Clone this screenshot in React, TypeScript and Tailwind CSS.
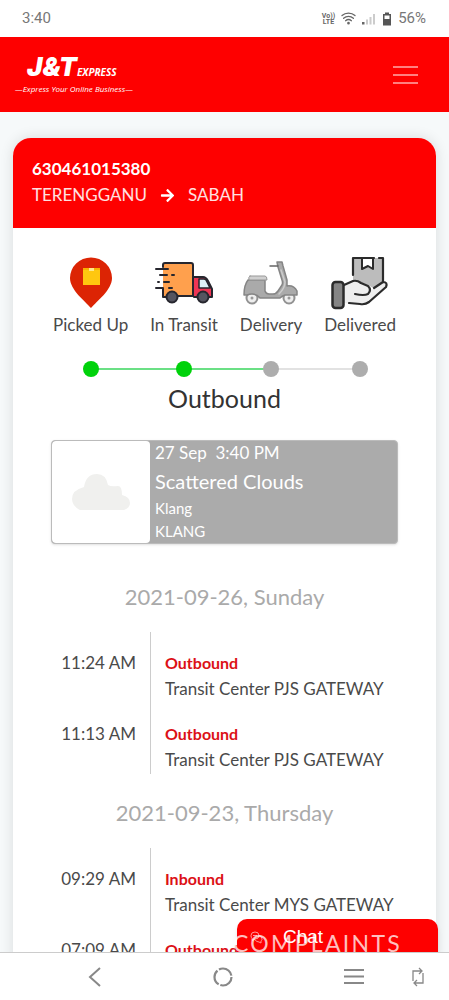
import type { ReactNode } from 'react'
import { FaArrowRight } from 'react-icons/fa'

type Scan = { time: string; status: string; place: string }
type Day = { date: string; scans: Scan[] }

const days: Day[] = [
  {
    date: '2021-09-26, Sunday',
    scans: [
      { time: '11:24 AM', status: 'Outbound', place: 'Transit Center PJS GATEWAY' },
      { time: '11:13 AM', status: 'Outbound', place: 'Transit Center PJS GATEWAY' },
    ],
  },
  {
    date: '2021-09-23, Thursday',
    scans: [
      { time: '09:29 AM', status: 'Inbound', place: 'Transit Center MYS GATEWAY' },
      { time: '07:09 AM', status: 'Outbound', place: 'Transit Center MYS GATEWAY' },
    ],
  },
]

function StatusBar() {
  return (
    <div className="flex h-[37px] shrink-0 items-center justify-between bg-white pr-[23px] pl-[22px] font-['Roboto',sans-serif] text-[15px] text-[#777]">
      <span>3:40</span>
      <div className="flex items-center gap-[6px]">
        <div className="text-center text-[7px] leading-[6px] font-bold text-[#666]">
          <div>Vo))</div>
          <div>LTE</div>
        </div>
        <svg width="15" height="13" viewBox="0 0 15 13" fill="none" stroke="#666" strokeWidth="1.3" strokeLinecap="round">
          <path d="M1 3.6C4.6 0.4 10.4 0.4 14 3.6M2.6 6.3c2.8-2.5 7-2.5 9.8 0M4.6 8.7c1.7-1.4 4.1-1.4 5.8 0" />
          <circle cx="7.5" cy="11.2" r="0.7" fill="#666" />
        </svg>
        <svg width="14" height="12" viewBox="0 0 14 12" fill="#ccc">
          <rect x="0" y="9" width="2.5" height="2.5" fill="#666" />
          <rect x="4" y="6.5" width="2" height="5" />
          <rect x="7.5" y="4" width="2" height="7.5" />
          <rect x="11" y="1" width="2" height="10.5" />
        </svg>
        <svg width="10" height="14" viewBox="0 0 10 14">
          <path d="M3 .5h4v1.5h2v11.5H1V2h2z" fill="#555" />
          <path d="M2.5 3.5h5v3.5h-5z" fill="#fff" />
        </svg>
        <span>56%</span>
      </div>
    </div>
  )
}

function Header() {
  return (
    <header className="flex h-[75px] shrink-0 items-center justify-between bg-[#fe0000] pr-[31px] pl-[15px]">
      <a href="#home" className="block whitespace-nowrap text-white italic">
        <span className="flex items-baseline pl-[12px] leading-6">
          <span className="font-['Inter',sans-serif] text-[26px] font-black">J&amp;T</span>
          <span className="font-['Open_Sans',sans-serif] text-[10px] font-bold">EXPRESS</span>
        </span>
        <span className="block font-['Open_Sans',sans-serif] text-[8px] leading-[10px]">—Express Your Online Business—</span>
      </a>
      <button type="button" aria-label="Menu" className="flex w-[25px] flex-col gap-[6px]">
        <span className="h-[2px] w-full bg-[#ff8080]" />
        <span className="h-[2px] w-full bg-[#ff8080]" />
        <span className="h-[2px] w-full bg-[#ff8080]" />
      </button>
    </header>
  )
}

function PinIcon() {
  return (
    <svg width="44" height="52" viewBox="0 0 44 52">
      <path d="M22 51C16 44 1 33 1 21a21 20.5 0 0 1 42 0c0 12-15 23-21 30z" fill="#dc2404" />
      <path d="M14 11h17v17H14z" fill="#ffc70f" />
      <path d="M14 11h17v2H14z" fill="#f9b000" />
      <path d="M20 11h5v3h-5z" fill="#ffe78a" />
    </svg>
  )
}

function TruckIcon() {
  return (
    <svg width="58" height="42" viewBox="0 0 58 42" strokeLinecap="round" strokeLinejoin="round">
      <path d="M8 3q0-2 2-2h26q2 0 2 2v32H8z" fill="#ffa04d" />
      <path d="M39 15h9q3 0 5 4l4 8v8H39z" fill="#ee3554" />
      <path d="M44 17h5q2 0 3 3l3 6H44z" fill="#dff1f7" stroke="#26262e" strokeWidth="1.5" />
      <g fill="none" stroke="#26262e" strokeWidth="2">
        <path d="M8 5V3q0-2 2-2h26q2 0 2 2v31H23M8 26v9h3M39 15h9q3 0 5 4l4 8v8h-3M39 35h3M1 7h12M5 13h7M17 13h2M3 20h1M9 20h5M1 26h7M14 26h3" />
      </g>
      <circle cx="17" cy="35" r="5.5" fill="#555560" stroke="#26262e" strokeWidth="2" />
      <circle cx="48" cy="35" r="5.5" fill="#555560" stroke="#26262e" strokeWidth="2" />
    </svg>
  )
}

function ScooterIcon() {
  return (
    <svg width="56" height="44" viewBox="0 0 56 44" strokeLinejoin="round" strokeLinecap="round">
      <circle cx="9" cy="37" r="5.5" fill="#eee" stroke="#929292" strokeWidth="2" />
      <circle cx="46" cy="37" r="5.5" fill="#eee" stroke="#929292" strokeWidth="2" />
      <path d="M5 19h17v11q1 3 4 3h4q3 0 5-3l4-6q1-2 0-5L35 6l-1-5h5l1 4 4 14v6q7-1 10 5v4H42q-3 1-5 3H17q-5-6-13-3H1q0-10 4-15z" fill="#aaa" stroke="#858585" strokeWidth="1.5" />
      <path d="M7 15h15q2 0 2 4H6q-1-3 1-4z" fill="#d0d0d0" stroke="#999" />
      <path d="M27 5h8" stroke="#666" strokeWidth="1.5" />
      <path d="M38 9l4 12q0 6-6 12" fill="none" stroke="#ccc" strokeWidth="1.5" />
      <circle cx="9" cy="37" r="1.5" fill="#999" />
      <circle cx="46" cy="37" r="1.5" fill="#999" />
    </svg>
  )
}

function HandIcon() {
  return (
    <svg width="58" height="54" viewBox="0 0 58 54" strokeLinecap="round" strokeLinejoin="round">
      <path d="M22 2h30v28l-8 3-9-5-13-3z" fill="#bcbcbc" />
      <path d="M31 2h11v11l-5-3-6 3z" fill="#fff" stroke="#2b2b2b" strokeWidth="2" />
      <path d="M13 29l9-4q5-1 9 2l6 3q3 2 2 5l13-8q4-1 4 3l-18 17q-4 3-9 2l-16-2z" fill="#eee" />
      <g fill="none" stroke="#2b2b2b" strokeWidth="2.2">
        <path d="M22 19V2h21M48 2h4v24M13 29l9-4q4-1 8 2l7 3q4 4 0 8-4 2-13 0M43 32l9-6q5 0 3 5L38 46q-4 3-9 2l-11-1" />
      </g>
      <rect x="1.5" y="26" width="11" height="26" rx="3" fill="#858585" stroke="#2b2b2b" strokeWidth="2.5" />
    </svg>
  )
}

function Step({ label, done, icon, line }: { label: string; done?: boolean; icon: ReactNode; line?: string }) {
  return (
    <li className="relative flex flex-col items-center">
      <div className="flex h-[56px] items-center">{icon}</div>
      <span className="mt-[2px] text-[17px] leading-6 whitespace-nowrap">{label}</span>
      {line && <span className={`absolute top-[113px] left-1/2 h-[2px] w-[90px] ${line}`} />}
      <span className={`relative mt-[24px] size-4 rounded-full ${done ? 'bg-[#00d20b]' : 'bg-[#adadad]'}`} />
    </li>
  )
}

function Weather() {
  return (
    <section className="mx-[38px] mt-[25px] flex h-[104px] overflow-hidden rounded-[4px] border border-[#bbb] bg-[#ababab] text-white shadow-sm">
      <div className="flex w-[98px] items-center justify-center rounded-[4px] bg-white">
        <svg width="58" height="37" viewBox="0 0 58 37" fill="#f0f0ee">
          <path d="M8 36q-8-4-8-11 0-9 12-12Q14 0 25 0q9 0 11 11 3 2 10 1 4 0 4 9 8 2 8 8 0 5-6 7z" />
        </svg>
      </div>
      <div className="pl-[5px] whitespace-nowrap">
        <p className="text-[17px] leading-6 whitespace-pre">27 Sep  3:40 PM</p>
        <p className="text-[20px] leading-[32px]">Scattered Clouds</p>
        <p className="text-[15px] leading-[23px]">Klang</p>
        <p className="text-[15px] leading-[23px]">KLANG</p>
      </div>
    </section>
  )
}

function DayLog({ date, scans }: Day) {
  return (
    <section>
      <h2 className="text-center text-[22px] leading-[28px] text-[#aaa]">{date}</h2>
      <ul className="mt-[21px] mb-[25px] flex flex-col">
        {scans.map((scan) => (
          <li key={scan.time} className="flex h-[71px] text-[17px] leading-[26px]">
            <time className="w-[138px] shrink-0 border-r border-[#ccc] pt-[18px] pr-[14px] text-right">{scan.time}</time>
            <div className="pt-[18px] pl-[14px] whitespace-nowrap">
              <p className="text-base leading-[26px] font-bold text-[#dc1016]">{scan.status}</p>
              <p>{scan.place}</p>
            </div>
          </li>
        ))}
      </ul>
    </section>
  )
}

function ChatIcon() {
  return (
    <svg width="13" height="13" viewBox="0 0 13 13" fill="none" stroke="#ff9a9a" strokeLinejoin="round">
      <path d="M5 1q4 0 4 3.5T5 8L2 9.5V7.5Q1 6.5 1 4.500 1 1 5 1z" />
      <path d="M9.5 4.5q3 1 2.5 4-.5 1-1 1.5v2l-2-1q-3 0-4-2.5M3 4.5h4" />
    </svg>
  )
}

function NavBar() {
  return (
    <nav className="flex h-[48px] shrink-0 items-center justify-between border-t border-[#ccc] bg-white pr-[25px] pl-[88px] text-[#888]">
      <button type="button" aria-label="Back">
        <svg width="13" height="20" viewBox="0 0 13 20" fill="none" stroke="currentColor" strokeWidth="2">
          <path d="M12 1L2 10l10 9" />
        </svg>
      </button>
      <button type="button" aria-label="Home">
        <svg width="20" height="20" viewBox="0 0 20 20" fill="none" stroke="currentColor" strokeWidth="2.2">
          <circle cx="10" cy="10" r="8.5" strokeDasharray="16 1.8" />
        </svg>
      </button>
      <div className="flex items-center gap-[48px]">
        <button type="button" aria-label="Recents">
          <svg width="20" height="17" viewBox="0 0 20 17" stroke="currentColor" strokeWidth="1.8">
            <path d="M0 2h20M0 8.5h20M0 15h20" />
          </svg>
        </button>
        <button type="button" aria-label="Rotate">
          <svg width="12" height="20" viewBox="0 0 12 20" fill="none" stroke="currentColor" strokeWidth="1.3">
            <path d="M1 14V4h8M11 6v10H3M7 1l3 3-3 3M5 13l-3 3 3 3" />
          </svg>
        </button>
      </div>
    </nav>
  )
}

export default function App() {
  return (
    <div className="flex h-screen flex-col overflow-hidden bg-[#f6f9fa] font-['Lato',sans-serif] text-[#4a4a4a]">
      <StatusBar />
      <Header />
      <main className="relative min-h-0 flex-1 overflow-hidden px-[13px] pt-[26px]">
        <article className="overflow-hidden rounded-t-[18px] bg-white shadow-[0_0_14px_rgba(0,0,0,0.12)]">
          <div className="h-[90px] bg-[#fe0000] px-[19px] pt-[18px] text-[17px] leading-[26px] text-white">
            <h1 className="font-bold">630461015380</h1>
            <p className="flex items-center gap-[13px] text-[#ffe0e0]">
              TERENGGANU <FaArrowRight className="text-[15px] text-white" /> SABAH
            </p>
          </div>
          <ol className="mt-[27px] flex justify-center gap-[22px]">
            <Step label="Picked Up" done icon={<PinIcon />} line="bg-[#6be085]" />
            <Step label="In Transit" done icon={<TruckIcon />} line="bg-[#6be085]" />
            <Step label="Delivery" icon={<ScooterIcon />} line="bg-[#e2e2e2]" />
            <Step label="Delivered" icon={<HandIcon />} />
          </ol>
          <p className="mt-[4px] text-center text-[25px] leading-[34px] text-[#333]">Outbound</p>
          <Weather />
          <div className="mt-[39px]">
            {days.map((day) => (
              <DayLog key={day.date} {...day} />
            ))}
          </div>
        </article>
        <button
          type="button"
          className="absolute right-[11px] bottom-0 flex h-[33px] w-[201px] items-center gap-[20px] rounded-t-[10px] bg-[#fe0000] pt-[3px] pl-[13px] font-['Liberation_Sans',sans-serif] text-[19px] text-white shadow-md"
        >
          <ChatIcon />
          Chat
        </button>
        <span className="pointer-events-none absolute right-[47px] bottom-0 text-[23px] leading-[18px] tracking-widest text-white/75">
          COMPLAINTS
        </span>
      </main>
      <NavBar />
    </div>
  )
}
